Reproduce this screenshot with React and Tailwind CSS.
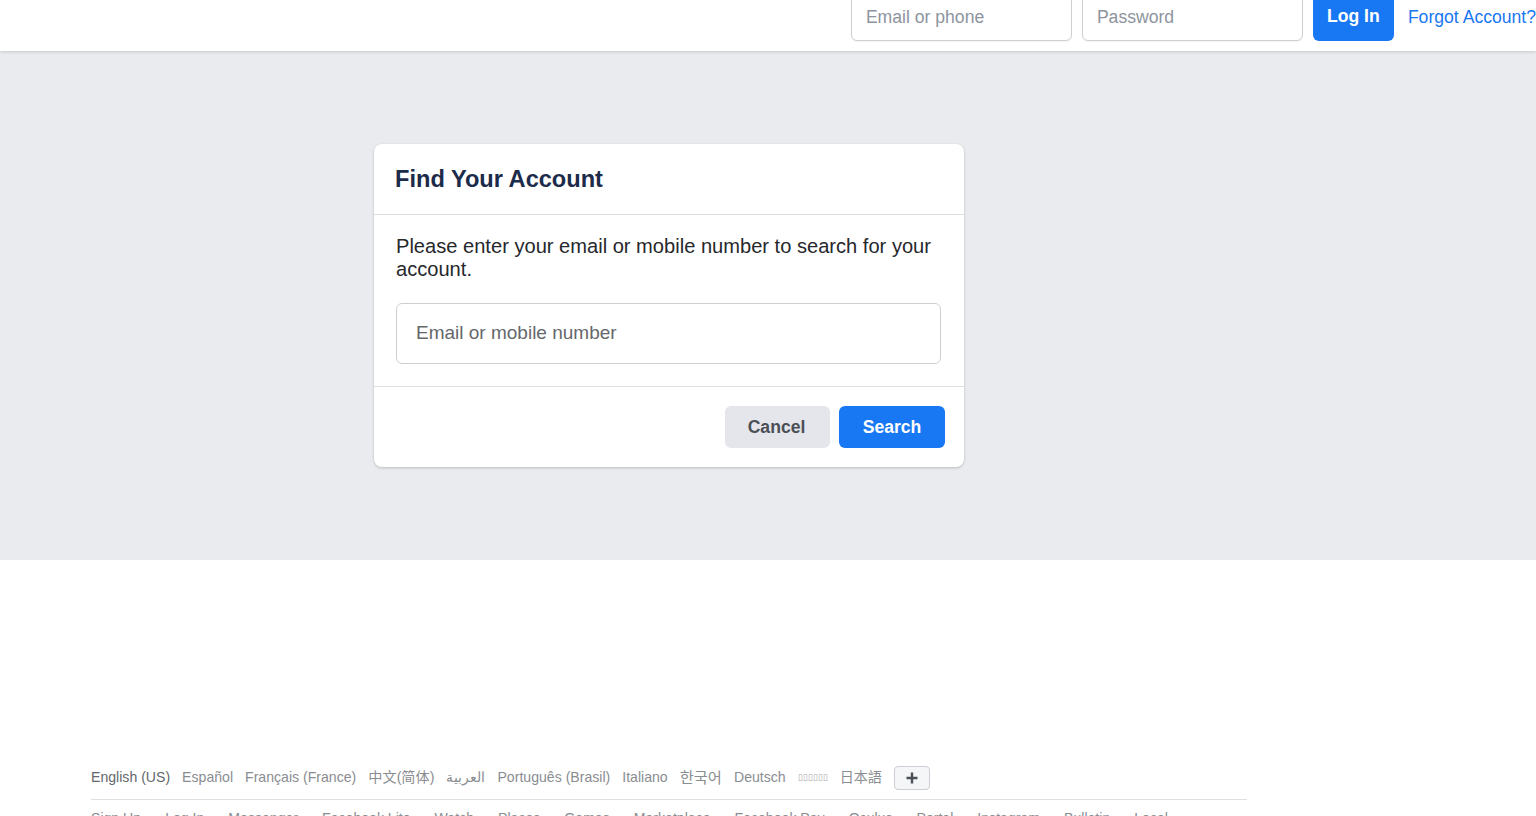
const languages = [
  { label: "English (US)", color: "text-[#65676b]" },
  { label: "Español" },
  { label: "Français (France)" },
  { label: "中文(简体)", color: "text-[14.2px]" },
  { label: "العربية" },
  { label: "Português (Brasil)" },
  { label: "Italiano" },
  { label: "한국어", color: "text-[15.3px]" },
  { label: "Deutsch" },
  // the reference has no Devanagari font, so this link shows as empty boxes
  { label: "▯▯▯▯▯▯", aria: "हिन्दी", color: "text-[9px] text-[#a8abaf]" },
  { label: "日本語" },
];

const footerLinks = [
  "Sign Up",
  "Log In",
  "Messenger",
  "Facebook Lite",
  "Watch",
  "Places",
  "Games",
  "Marketplace",
  "Facebook Pay",
  "Oculus",
  "Portal",
  "Instagram",
  "Bulletin",
  "Local",
];

function TopInput({ placeholder, type = "text" }) {
  return (
    <input
      type={type}
      placeholder={placeholder}
      className="h-[50px] w-[221px] rounded-md border border-[#ccd0d5] bg-white px-[14px] pt-[2px] text-[17.6px] text-[#1c1e21] shadow-[0_1px_1px_rgba(0,0,0,0.05)] outline-none placeholder:text-[#8d949e]"
    />
  );
}

export default function App() {
  return (
    <div className="h-[816px] overflow-hidden bg-white font-['Liberation_Sans','Noto_Sans_CJK_SC',sans-serif]">
      <header className="relative z-10 flex h-[51px] items-end justify-end overflow-hidden bg-white pb-[10px] shadow-[0_1px_3px_rgba(0,0,0,0.15)]">
        <div className="flex items-start gap-[10px]">
          <TopInput placeholder="Email or phone" />
          <TopInput placeholder="Password" type="password" />
          <button type="button" className="h-[50px] w-[81px] rounded-md bg-[#1877f2] text-[17.6px] font-bold text-white">
            Log In
          </button>
        </div>
        <a href="#" className="mb-[14px] ml-[14px] whitespace-nowrap text-[17.6px] leading-5 text-[#1877f2]">
          Forgot Account?
        </a>
      </header>

      <main className="h-[509px] bg-[#e9ebee] pl-[374px] pt-[93px]">
        <section className="w-[590px] rounded-lg bg-white shadow-[0_1px_3px_rgba(0,0,0,0.2)]">
          <h2 className="flex h-[71px] items-center border-b border-[#dddfe2] pl-[21px] pt-[1px] text-[23.6px] font-bold text-[#1c2b4a]">
            Find Your Account
          </h2>
          <div className="border-b border-[#dddfe2] px-[22px] pb-[22px] pt-[20px]">
            <p className="text-[20.1px] leading-[23px] text-[#26282c]">
              Please enter your email or mobile number to search for your account.
            </p>
            <input
              type="text"
              placeholder="Email or mobile number"
              className="mt-[22px] h-[61px] w-[545px] rounded-md border border-[#ccd0d5] px-[19px] pb-[2px] text-[19px] text-[#1c1e21] outline-none placeholder:text-[#65676b]"
            />
          </div>
          <div className="flex h-[80px] items-start justify-end gap-[9px] pr-[19px] pt-[19px]">
            <button type="button" className="h-[42px] w-[105px] rounded-md bg-[#e4e6eb] pr-[2px] text-[17.6px] font-bold text-[#4b4f56]">
              Cancel
            </button>
            <button type="button" className="h-[42px] w-[106px] rounded-md bg-[#1877f2] text-[17.6px] font-bold text-white">
              Search
            </button>
          </div>
        </section>
      </main>

      <footer className="ml-[91px] w-[1156px] pt-[206px] text-[14.1px] text-[#8a8d91]">
        <div className="flex h-[24px] items-center gap-[12px] whitespace-nowrap">
          {languages.map(({ label, aria, color }) => (
            <a key={label} href="#" aria-label={aria} className={color}>
              {label}
            </a>
          ))}
          <button type="button" className="flex h-[24px] w-[36px] items-center justify-center rounded-sm border border-[#ccd0d5] bg-[#f5f6f7] text-[#4b4f56]">
            <svg width="14" height="14" viewBox="0 0 14 14" aria-hidden="true">
              <path d="M7 1.5v11M1.5 7h11" stroke="currentColor" strokeWidth="2.4" fill="none" />
            </svg>
          </button>
        </div>
        <div className="mt-[9px] flex gap-[24px] whitespace-nowrap border-t border-[#dddfe2] pt-[8px]">
          {footerLinks.map((label) => (
            <a key={label} href="#">
              {label}
            </a>
          ))}
        </div>
      </footer>
    </div>
  );
}
